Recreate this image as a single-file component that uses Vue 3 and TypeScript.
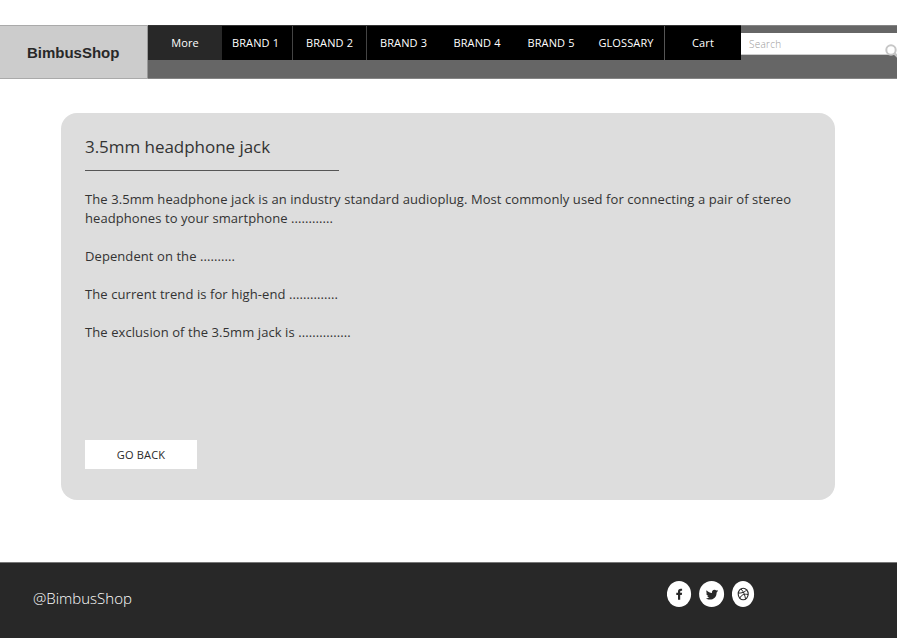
<script setup lang="ts">
interface NavItem {
  label: string
  tone: string
}

const navItems: NavItem[] = [
  { label: 'More', tone: 'active' },
  { label: 'BRAND 1', tone: 'first' },
  { label: 'BRAND 2', tone: 'divided' },
  { label: 'BRAND 3', tone: 'divided' },
  { label: 'BRAND 4', tone: 'plain' },
  { label: 'BRAND 5', tone: 'plain' },
  { label: 'GLOSSARY', tone: 'glossary' },
  { label: 'Cart', tone: 'cart' },
]

const paragraphs: { id: string; lines: string[] }[] = [
  {
    id: 'intro',
    lines: [
      'The 3.5mm headphone jack is an industry standard audioplug. Most commonly used for connecting a pair of stereo',
      'headphones to your smartphone ............',
    ],
  },
  { id: 'dependent', lines: ['Dependent on the ..........'] },
  { id: 'trend', lines: ['The current trend is for high-end ..............'] },
  { id: 'exclusion', lines: ['The exclusion of the 3.5mm jack is ...............'] },
]
</script>

<template>
  <div class="page">
    <header class="topbar">
      <div class="logo"><span>BimbusShop</span></div>
      <nav class="nav">
        <a v-for="item in navItems" :key="item.label" class="nav-item" :class="item.tone"><span>{{ item.label }}</span></a>
      </nav>
      <div class="search">
        <span class="search-label">Search</span>
        <svg class="search-icon" width="16" height="16" viewBox="0 0 16 16">
          <circle cx="6" cy="6" r="4.7" fill="none" stroke="#c6c6c6" stroke-width="2" />
          <path d="M9.5 9.5 L14 14" stroke="#c6c6c6" stroke-width="2.6" />
        </svg>
      </div>
    </header>

    <main class="card">
      <h1 class="title"><span>3.5mm headphone jack</span></h1>
      <div class="article">
        <p v-for="p in paragraphs" :key="p.id">
          <span v-for="line in p.lines" :key="line" class="line">{{ line }}</span>
        </p>
      </div>
      <button class="back" type="button">GO BACK</button>
    </main>

    <footer class="footer">
      <span class="handle">@BimbusShop</span>
      <div class="social">
        <svg width="25" height="27" viewBox="0 0 25 27">
          <ellipse cx="12" cy="13" rx="12.1" ry="13" fill="#fff" />
          <path d="M11 18.7V13.9H9.3V11.8H11V10.5C11 8.7 12.1 7.7 13.8 7.7H15.1V9.8H14.2C13.5 9.8 13.2 10.1 13.2 10.7V11.8H15.1L14.8 13.9H13.2V18.7Z" fill="#282828" />
        </svg>
        <svg width="26" height="27" viewBox="0 0 26 27">
          <ellipse cx="12.6" cy="13" rx="12.5" ry="13" fill="#fff" />
          <path d="M19 10.3 17.6 11.4C17.8 15.8 14.6 18.6 10.8 18.6 9.2 18.6 7.9 18.2 6.9 17.3 8.5 17.5 9.8 17.2 10.5 16.6 9.5 16.5 8.7 16 8.4 15H9.5C8.3 14.6 7.3 13.7 7.2 12.3L8.4 12.7C7.4 11.8 7 10.5 7.6 9.2 9.3 10.9 11 11.8 13 12 12.6 10 13.8 8.7 15.5 8.7 16.3 8.7 16.8 9 17.3 9.5L18.9 8.9 18.2 10.4Z" fill="#282828" />
        </svg>
        <svg width="23" height="27" viewBox="0 0 23 27">
          <ellipse cx="11" cy="13" rx="11.1" ry="13" fill="#fff" />
          <g fill="none" stroke="#282828" stroke-width="1">
            <ellipse cx="11.2" cy="13" rx="5" ry="5.8" stroke-width="1.1" />
            <path d="M9 7.9C11.8 11.1 13 14.3 13.5 17.9M6.2 12.1C9.8 12.2 13.2 11.2 14.8 8.8M7.8 17.2C9.3 13.8 12.3 12.5 16.2 13.6" />
          </g>
        </svg>
      </div>
    </footer>
  </div>
</template>

<style>
body {
  margin: 0;
  background: #fff;
  overflow: hidden;
}
</style>

<style scoped>
.page {
  box-sizing: border-box;
  width: 897px;
  height: 638px;
  padding-top: 25px;
  overflow: hidden;
  display: flex;
  flex-direction: column;
  font-family: "Open Sans", sans-serif;
  color: #333;
}
.topbar {
  box-sizing: border-box;
  height: 54px;
  flex: none;
  display: flex;
  align-items: flex-start;
  background: #666;
  border-top: 1px solid #858585;
  border-bottom: 1px solid #858585;
}
.logo {
  box-sizing: border-box;
  width: 148px;
  height: 52px;
  flex: none;
  padding-left: 27px;
  background: #ccc;
  border-right: 1px solid #999;
  box-shadow: 0 -1px #aaa, 0 1px #aaa;
  font: bold 15px/54px "Liberation Sans", sans-serif;
  letter-spacing: -0.01px;
  color: #282828;
}
.nav {
  display: flex;
  height: 34px;
  flex: none;
  background: #000;
  box-shadow: 0 -1px #333;
}
.nav-item {
  box-sizing: border-box;
  width: 74px;
  text-align: center;
  font-size: 11px;
  line-height: 34px;
  letter-spacing: 0.12px;
  color: #fff;
  white-space: nowrap;
}
.nav-item.active { background: #282828; }
.nav-item.first { width: 70px; padding-right: 3px; }
.nav-item.divided { border-left: 1px solid #444; }
.nav-item.glossary { width: 76px; }
.nav-item.cart { width: 77px; border-left: 1px solid #555; }
.search {
  position: relative;
  box-sizing: border-box;
  flex: 1;
  height: 22px;
  margin-top: 7px;
  padding-left: 8px;
  background: #fff;
  border-bottom: 1px solid #ccc;
  font-size: 10px;
  font-weight: 300;
  line-height: 23px;
  letter-spacing: 0.25px;
  color: #999;
}
.search-icon {
  position: absolute;
  left: 144px;
  top: 11px;
}
.card {
  box-sizing: border-box;
  width: 774.5px;
  height: 387px;
  flex: none;
  margin: 33.5px 0 0 60.5px;
  padding: 20.5px 0 0 24.5px;
  border-radius: 16px;
  background: #ddd;
  display: flex;
  flex-direction: column;
  align-items: flex-start;
}
.title {
  box-sizing: border-box;
  width: 254px;
  height: 38px;
  margin: 0 0 19px;
  border-bottom: 1px solid #555;
  font-size: 17px;
  font-weight: 400;
  line-height: 28px;
  letter-spacing: -0.04px;
  white-space: nowrap;
}
.article {
  height: 250px;
  font-size: 13px;
  line-height: 19px;
  letter-spacing: 0.08px;
  white-space: nowrap;
}
.article p { margin: 0 0 19px; }
.line { display: block; }
.back {
  width: 112px;
  height: 29px;
  flex: none;
  padding: 0;
  border: 0;
  background: #fff;
  font: 11px/29px "Open Sans", sans-serif;
  letter-spacing: 0.2px;
  color: #282828;
}
.footer {
  box-sizing: border-box;
  height: 76px;
  flex: none;
  margin-top: 62.5px;
  padding-left: 33px;
  border-top: 1px solid #777;
  background: #282828;
  display: flex;
}
.handle {
  width: 634px;
  font-size: 15px;
  font-weight: 300;
  line-height: 70px;
  color: #fff;
}
.social {
  display: flex;
  gap: 7px;
  padding-top: 18px;
}
</style>
